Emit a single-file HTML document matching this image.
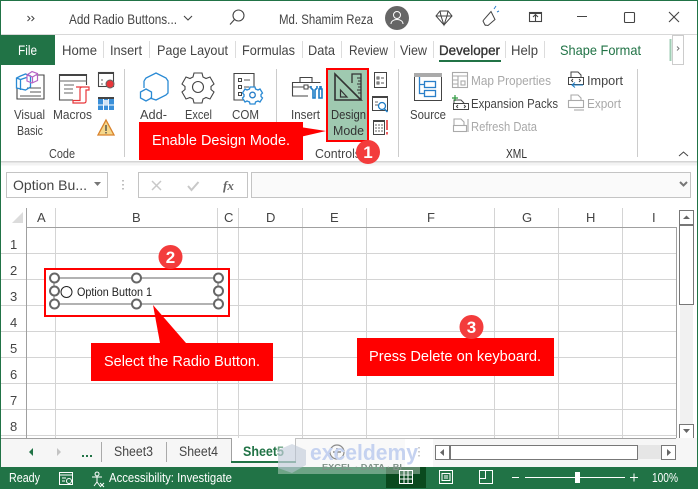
<!DOCTYPE html>
<html><head><meta charset="utf-8"><style>
html,body{margin:0;padding:0;background:#fff}
svg{display:block}
text{font-family:"Liberation Sans",sans-serif;fill:#444;font-size:13px}
.i{fill:none;stroke:#444;stroke-width:1.1}
.b{fill:none;stroke:#2a7fc9;stroke-width:1.3}
.g{fill:none;stroke:#aaa;stroke-width:1.1}
.grid line{stroke:#d4d4d4;stroke-width:1}
.h{fill:#fff;stroke:#666;stroke-width:2}
</style></head><body>
<svg width="698" height="489" viewBox="0 0 698 489" xmlns="http://www.w3.org/2000/svg">
<rect width="698" height="489" fill="#fff"/>
<!-- window frame -->
<rect x="0" y="0" width="698" height="1" fill="#217346"/>
<rect x="0" y="0" width="1" height="489" fill="#217346"/>
<rect x="697" y="0" width="1" height="489" fill="#217346"/>
<rect x="1" y="34" width="696" height="1" fill="#d8d8d8"/>

<!-- title bar -->
<path d="M27.500 16l2.500 2.500-2.500 2.500M31.500 16l2.500 2.500-2.500 2.500" fill="none" stroke="#444" stroke-width="1"/>
<text x="69" y="24" textLength="108" lengthAdjust="spacingAndGlyphs" style="font-size:14px">Add Radio Buttons...</text>
<path d="M184 16l4 4 4-4" fill="none" stroke="#444" stroke-width="1.100"/>
<circle cx="238.500" cy="15.500" r="5.500" class="i"/><path d="M234.500 19.500l-4.500 5" class="i"/>
<text x="279" y="24" textLength="94" lengthAdjust="spacingAndGlyphs" style="font-size:14px">Md. Shamim Reza</text>
<circle cx="397" cy="18" r="12" fill="#666"/>
<circle cx="397" cy="15" r="3.500" fill="none" stroke="#fff"/><path d="M391 24c0-6 12-6 12 0" fill="none" stroke="#fff"/>
<path d="M440 11h8l4 5-8 9-8-9zM436 16h16M441 16l3 9 3-9M440 11l1 5M448 11l-1 5" fill="none" stroke="#444"/>
<path d="M483 21l2 4 3 .5 7-6-4-8-7 8zM486 25l-1 .5" fill="none" stroke="#444"/>
<path d="M494 9l2-3M497 12l2-1" stroke="#2a7fc9" fill="none"/>
<rect x="529.500" y="12.500" width="12" height="9" class="i"/><rect x="529" y="12" width="13" height="2" fill="#444"/><path d="M535.500 21v-6M533 17l2.500-2.500 2.500 2.500" class="i"/>
<rect x="577" y="16" width="10" height="1" fill="#444"/>
<rect x="624.500" y="12.500" width="10" height="10" rx="1" class="i"/>
<path d="M669 12l10 10M679 12l-10 10" class="i"/>

<!-- tabs -->
<rect x="0" y="35" width="55" height="30" fill="#217346"/>
<text x="18" y="55" textLength="19" lengthAdjust="spacingAndGlyphs" style="font-size:14px;fill:#fff">File</text>
<text x="62" y="55" textLength="35" lengthAdjust="spacingAndGlyphs" style="font-size:14px">Home</text>
<text x="110" y="55" textLength="32" lengthAdjust="spacingAndGlyphs" style="font-size:14px">Insert</text>
<text x="157" y="55" textLength="71" lengthAdjust="spacingAndGlyphs" style="font-size:14px">Page Layout</text>
<text x="242" y="55" textLength="53" lengthAdjust="spacingAndGlyphs" style="font-size:14px">Formulas</text>
<text x="308" y="55" textLength="27" lengthAdjust="spacingAndGlyphs" style="font-size:14px">Data</text>
<text x="349" y="55" textLength="39" lengthAdjust="spacingAndGlyphs" style="font-size:14px">Review</text>
<text x="400" y="55" textLength="27" lengthAdjust="spacingAndGlyphs" style="font-size:14px">View</text>
<text x="439" y="55" textLength="61" lengthAdjust="spacingAndGlyphs" style="font-size:14px;fill:#333;stroke:#333;stroke-width:.35">Developer</text>
<text x="511" y="55" textLength="27" lengthAdjust="spacingAndGlyphs" style="font-size:14px">Help</text>
<text x="560" y="55" textLength="81" lengthAdjust="spacingAndGlyphs" style="font-size:14px;fill:#217346">Shape Format</text>
<rect x="439" y="60" width="62" height="2" fill="#217346"/>
<path d="M103.500 41v17M149.500 41v17M235.500 41v17M302.500 41v17M341.500 41v17M394.500 41v17M433.500 41v17M505.500 41v17M544.500 41v17" stroke="#dcdcdc" fill="none"/>
<path d="M670.500 39v22" stroke="#9fcdb4" stroke-width="2" fill="none"/>
<rect x="672.500" y="35.500" width="11" height="29" fill="#fff" stroke="#ccc"/>
<path d="M677 46.500l2 2-2 2" fill="none" stroke="#777"/>

<!-- ribbon -->
<rect x="1" y="161" width="696" height="1.500" fill="#d4d4d4"/>
<rect x="1" y="162.500" width="696" height="3" fill="#f3f3f3"/>
<path d="M124.500 69v88M276.500 69v88M398.500 69v88M637.500 69v88" stroke="#ccc" fill="none"/>

<!-- Visual Basic -->
<path d="M36 75h8v24H17V88" class="i"/><path d="M27 88h14M30 92h11M20 96h21" stroke="#555" fill="none"/>
<path d="M20.500 76l5-2 5 2v11l-5 3-9-2V78zM16.500 78l4 1.500 6-2M20.500 79.500V90" fill="none" stroke="#2a8ad4" stroke-width="1.300"/>
<path d="M27 75l5-3.500 5.500 2v7l-5.500 2.500-5-2zM27 75l5.500 2 5-3M32.500 77v6" fill="none" stroke="#b563c4" stroke-width="1.200"/>
<text x="14" y="119" textLength="31" lengthAdjust="spacingAndGlyphs">Visual</text>
<text x="17" y="135" textLength="26" lengthAdjust="spacingAndGlyphs">Basic</text>
<!-- Macros -->
<path d="M73 100H59.500V74.500h27V85" class="i"/><rect x="59" y="74" width="28" height="2" fill="#444"/>
<path d="M59 81h28M64 85h10M64 89h9M64 93h9" stroke="#666" fill="none"/>
<path d="M76 87h13v3h-3v11c0 1.500-1 2-2 2H73v-2.500h7V89c0-1 1-2 2-2" fill="#fff" stroke="#e8363a" stroke-width="1.200"/>
<text x="53" y="119" textLength="39" lengthAdjust="spacingAndGlyphs">Macros</text>
<!-- small code icons -->
<rect x="98.500" y="72.500" width="15" height="14" class="i"/><rect x="98" y="72" width="16" height="2" fill="#444"/>
<circle cx="110" cy="84" r="4" fill="#e8363a" stroke="#666"/><path d="M101 80h2M101 84h2" stroke="#666"/>
<rect x="98" y="97" width="16" height="13" fill="#3a8fd9"/><path d="M98 105h16M103.500 97v13M108.500 97v13" stroke="#fff" fill="none"/><rect x="98" y="97" width="16" height="2" fill="#444"/><rect x="103.500" y="100" width="5" height="5" fill="#cfe3f5"/>
<path d="M106 120l8 15H98z" fill="#f5d78b" stroke="#d9822b" stroke-width="1.300"/><path d="M106 125v6M106 132v1.500" stroke="#444" stroke-width="1.300"/>
<text x="49" y="158" textLength="26" lengthAdjust="spacingAndGlyphs">Code</text>

<!-- Add-ins -->
<path d="M144 81l2-3 10-5 10 5 2 3v12l-2 2-10 5-6-2M144 81v7" fill="none" stroke="#2a8ad4" stroke-width="1.300"/>
<path d="M146 89l5.500 3v6l-5.500 3-5.500-3v-6z" fill="none" stroke="#2a8ad4" stroke-width="1.300"/>
<text x="140" y="119" textLength="27" lengthAdjust="spacingAndGlyphs">Add-</text>
<!-- gear -->
<path d="M194 73h8l1 4 3 1.500 4-1.500 4 7-3 2.500v3l3 2.500-4 7-4-1.500-3 1.500-1 4h-8l-1-4-3-1.500-4 1.500-4-7 3-2.500v-3l-3-2.500 4-7 4 1.500 3-1.500z" class="i"/>
<circle cx="198" cy="87" r="5.500" class="i"/>
<text x="185" y="119" textLength="27" lengthAdjust="spacingAndGlyphs">Excel</text>
<!-- COM -->
<path d="M247 100h-13V73.500h20V88" class="i"/>
<rect x="238.500" y="78.500" width="3" height="3" class="i" style="stroke-width:1"/><rect x="238.500" y="85.500" width="3" height="3" class="i" style="stroke-width:1"/><rect x="238.500" y="92.500" width="3" height="3" class="i" style="stroke-width:1"/>
<path d="M244 80h6M244 87h5" stroke="#555" fill="none"/>
<path d="M250 87h5l.5 2 2.500 1 2-1 2.500 4-1.500 1.500v2l1.500 1.500-2.500 4-2-1-2.500 1-.5 2h-5l-.5-2-2.500-1-2 1-2.500-4 1.500-1.500v-2l-1.500-1.500 2.500-4 2 1 2.500-1z" stroke="#2a8ad4" stroke-width="1.300" fill="#fff"/>
<circle cx="252.500" cy="95" r="2.800" class="b"/>
<text x="232" y="119" textLength="27" lengthAdjust="spacingAndGlyphs">COM</text>

<!-- Insert -->
<path d="M300 82v-4.500h12V82M308 96h-15.500V82.500h28" class="i"/><path d="M293 87h11M308 87h3" stroke="#444"/>
<rect x="304" y="85" width="4" height="4" class="i" style="stroke-width:1"/>
<path d="M311 86v2l2 2v8h2v-8l2-2v-2M320 86v3h-1v9h3v-9h-1v-3" fill="none" stroke="#1d7cc5" stroke-width="1.600"/>
<text x="291" y="119" textLength="29" lengthAdjust="spacingAndGlyphs">Insert</text>

<!-- Design Mode -->
<rect x="327" y="69" width="41" height="72" fill="#9fc9b0" stroke="#f00" stroke-width="2"/>
<path d="M335 74v26h26z" fill="none" stroke="#333" stroke-width="1.600"/>
<path d="M340.500 90l6.500 7h-6.500z" fill="none" stroke="#333" stroke-width="1.200"/>
<path d="M352 83V74h9v26" fill="none" stroke="#333" stroke-width="1.300"/>
<path d="M357 78h4M358 81h3M357 84h4M358 87h3M357 90h4M358 93h3" stroke="#333" fill="none"/>
<text x="331" y="119" textLength="35" lengthAdjust="spacingAndGlyphs" style="fill:#333">Design</text>
<text x="333" y="135" textLength="31" lengthAdjust="spacingAndGlyphs" style="fill:#333">Mode</text>

<!-- small controls -->
<rect x="374.500" y="72.500" width="12" height="15" class="i" style="stroke-width:1"/>
<path d="M377 77h2v2h-2zM377 82h2v2h-2zM381 78h3M381 83h3" stroke="#555" fill="none"/>
<rect x="372.500" y="96.500" width="15" height="14" class="i" style="stroke-width:1"/><rect x="372" y="96" width="16" height="2" fill="#444"/>
<circle cx="382" cy="106" r="3.500" fill="none" stroke="#1d7cc5" stroke-width="1.300"/><path d="M384.500 109l3 3" stroke="#1d7cc5" stroke-width="1.500"/>
<path d="M375 102h3M375 105h3" stroke="#666"/>
<rect x="373.500" y="120.500" width="11" height="14" class="i" style="stroke-width:1"/><rect x="373" y="120" width="12" height="2" fill="#444"/>
<path d="M375 125h8M375 128h8M375 131h8" stroke="#666" stroke-dasharray="2 1" fill="none"/>
<path d="M387 120v10M387 132v2.500" stroke="#e8363a" stroke-width="1.600"/>

<!-- Source -->
<rect x="414.500" y="73.500" width="27" height="27" fill="#fff" stroke="#444"/><rect x="414" y="73" width="28" height="4" fill="#aaa"/>
<rect x="424.500" y="81.500" width="11" height="6" class="b"/><rect x="424.500" y="90.500" width="11" height="6" class="b"/>
<path d="M419.500 77v16.500h5M419.500 84.500h5" class="b"/>
<text x="410" y="119" textLength="36" lengthAdjust="spacingAndGlyphs">Source</text>

<!-- XML small commands -->
<rect x="452.500" y="72.500" width="15" height="15" class="g"/><path d="M452 76h16M458 76v12M452 80h6M452 84h6" class="g"/><rect x="461" y="81" width="4" height="4" class="g"/>
<text x="471" y="85" textLength="80" lengthAdjust="spacingAndGlyphs" style="fill:#a8a8a8">Map Properties</text>
<path d="M454 103v-3h7l3 3" class="i" style="stroke-width:1"/><rect x="453.500" y="103.500" width="15" height="6" fill="#fff" stroke="#444"/><path d="M458 105l-1.500 1.500 1.500 1.500M464 105l1.500 1.500-1.500 1.500" stroke="#444" fill="none"/>
<path d="M452 98h6M455 95v6" stroke="#2d9a3f" stroke-width="1.200"/>
<text x="471" y="108" textLength="87" lengthAdjust="spacingAndGlyphs">Expansion Packs</text>
<path d="M454 125v-6h7l3 3v3" class="g"/><rect x="453.500" y="125.500" width="13" height="6" class="g"/><path d="M468 119v13" class="g"/>
<text x="471" y="131" textLength="66" lengthAdjust="spacingAndGlyphs" style="fill:#a8a8a8">Refresh Data</text>
<path d="M571 77v-5h7l3 3v3" class="i" style="stroke-width:1"/><rect x="568.500" y="77.500" width="15" height="7" fill="#fff" stroke="#444"/><path d="M573 79l-1.500 1.500 1.500 1.500M579 79l1.500 1.500-1.500 1.500" stroke="#444" fill="none"/><path d="M572 85h11M575 82.500l-3 2.500 3 2.500" stroke="#1d7cc5" fill="none"/>
<text x="587" y="85" textLength="36" lengthAdjust="spacingAndGlyphs">Import</text>
<path d="M571 100v-5h7l3 3v3" class="g"/><rect x="568.500" y="100.500" width="15" height="7" class="g"/><path d="M574 110h10" class="g"/>
<text x="587" y="108" textLength="34" lengthAdjust="spacingAndGlyphs" style="fill:#a8a8a8">Export</text>
<text x="506" y="158" textLength="21" lengthAdjust="spacingAndGlyphs" style="fill:#333">XML</text>
<path d="M679 156l4.500-4 4.500 4" fill="none" stroke="#444"/>
<text x="315" y="158" textLength="46" lengthAdjust="spacingAndGlyphs">Controls</text>

<!-- callout 1 -->
<path d="M300 127L326 131 300 137z" fill="#f00"/>
<rect x="139" y="122" width="164" height="38" fill="#f00"/>
<text x="152" y="145" textLength="138" lengthAdjust="spacingAndGlyphs" style="font-size:15px;fill:#fff">Enable Design Mode.</text>
<circle cx="368" cy="152" r="12" fill="#f33c3c"/>
<text x="368" y="158" text-anchor="middle" style="font-size:17px;font-weight:bold;fill:#fff">1</text>

<!-- formula bar -->
<rect x="6.500" y="172.500" width="101" height="25" fill="#fff" stroke="#c4c4c4"/>
<text x="13" y="190" textLength="74" lengthAdjust="spacingAndGlyphs" style="font-size:14px">Option Bu...</text>
<path d="M94 182h7l-3.500 4z" fill="#777"/>
<path d="M123 180v1.500M123 184v1.500M123 188v1.500" stroke="#aaa" stroke-width="1.500"/>
<rect x="138.500" y="172.500" width="109" height="25" fill="#fff" stroke="#c4c4c4"/>
<path d="M152 181l9 9M161 181l-9 9" stroke="#c8c8c8" stroke-width="1.500"/>
<path d="M188 186l3.500 4 7-8" fill="none" stroke="#c8c8c8" stroke-width="2"/>
<text x="223" y="190" style="font-family:'Liberation Serif',serif;font-style:italic;font-weight:bold;font-size:13px;fill:#666">fx</text>
<rect x="251.500" y="172.500" width="439" height="25" fill="#fafafa" stroke="#c4c4c4"/>
<path d="M680 182l3.500 3.500 3.500-3.500" fill="none" stroke="#777" stroke-width="2"/>

<!-- grid headers -->
<path d="M23 212v11H12z" fill="#dcdcdc"/>
<g class="grid">
<line x1="27" x2="676" y1="253.500" y2="253.500"/><line x1="27" x2="676" y1="279.500" y2="279.500"/><line x1="27" x2="676" y1="305.500" y2="305.500"/><line x1="27" x2="676" y1="331.500" y2="331.500"/><line x1="27" x2="676" y1="357.500" y2="357.500"/><line x1="27" x2="676" y1="383.500" y2="383.500"/><line x1="27" x2="676" y1="409.500" y2="409.500"/><line x1="1" x2="676" y1="435.500" y2="435.500"/>
<line x1="1" x2="26" y1="253.500" y2="253.500"/><line x1="1" x2="26" y1="279.500" y2="279.500"/><line x1="1" x2="26" y1="305.500" y2="305.500"/><line x1="1" x2="26" y1="331.500" y2="331.500"/><line x1="1" x2="26" y1="357.500" y2="357.500"/><line x1="1" x2="26" y1="383.500" y2="383.500"/><line x1="1" x2="26" y1="409.500" y2="409.500"/>
<line x1="55.500" x2="55.500" y1="208" y2="438"/><line x1="217.500" x2="217.500" y1="208" y2="438"/><line x1="238.500" x2="238.500" y1="208" y2="438"/><line x1="302.500" x2="302.500" y1="208" y2="438"/><line x1="366.500" x2="366.500" y1="208" y2="438"/><line x1="494.500" x2="494.500" y1="208" y2="438"/><line x1="558.500" x2="558.500" y1="208" y2="438"/><line x1="622.500" x2="622.500" y1="208" y2="438"/>
</g>
<path d="M26.500 208v230M26 227.500h650M676.500 227v211" stroke="#a0a0a0" fill="none"/>
<text x="37" y="222">A</text><text x="132" y="222">B</text><text x="224" y="222">C</text><text x="266" y="222">D</text><text x="330" y="222">E</text><text x="427" y="222">F</text><text x="522" y="222">G</text><text x="586" y="222">H</text><text x="652" y="222">I</text>
<text x="10" y="249">1</text><text x="10" y="275">2</text><text x="10" y="301">3</text><text x="10" y="327">4</text><text x="10" y="353">5</text><text x="10" y="379">6</text><text x="10" y="405">7</text><text x="10" y="431">8</text>

<!-- vertical scrollbar -->
<rect x="677" y="208" width="20" height="230" fill="#fff"/>
<rect x="680" y="305" width="13" height="119" fill="#f1f1f1"/>
<rect x="679.500" y="210.500" width="14" height="14" fill="#fff" stroke="#777"/><path d="M683 219h7l-3.500-3.500z" fill="#666"/>
<rect x="679.500" y="225.500" width="14" height="79" fill="#fff" stroke="#777"/>
<rect x="679.500" y="424.500" width="14" height="14" fill="#fff" stroke="#777"/><path d="M683 429h7l-3.500 4z" fill="#666"/>

<!-- control -->
<rect x="45" y="269" width="184" height="47" fill="#fff" stroke="#f00" stroke-width="2"/>
<rect x="54" y="278" width="164" height="26" fill="none" stroke="#666" stroke-width="1"/>
<circle class="h" cx="54.500" cy="278" r="4.500"/><circle class="h" cx="136.500" cy="278" r="4.500"/><circle class="h" cx="218.500" cy="278" r="4.500"/>
<circle class="h" cx="54.500" cy="291" r="4.500"/><circle class="h" cx="218.500" cy="291" r="4.500"/>
<circle class="h" cx="54.500" cy="304" r="4.500"/><circle class="h" cx="136.500" cy="304" r="4.500"/><circle class="h" cx="218.500" cy="304" r="4.500"/>
<circle cx="66.500" cy="292" r="5.500" fill="#fff" stroke="#222"/>
<text x="77" y="296" textLength="75" lengthAdjust="spacingAndGlyphs" style="font-size:11.500px;fill:#222">Option Button 1</text>
<circle cx="170.500" cy="257" r="12" fill="#f33c3c"/>
<text x="170.500" y="263" text-anchor="middle" style="font-size:17px;font-weight:bold;fill:#fff">2</text>

<!-- callout 2 -->
<path d="M153 305L186 343H160z" fill="#f00"/>
<rect x="91" y="343" width="182" height="38" fill="#f00"/>
<text x="104" y="366" textLength="156" lengthAdjust="spacingAndGlyphs" style="font-size:15px;fill:#fff">Select the Radio Button.</text>

<!-- callout 3 -->
<rect x="357" y="338" width="197" height="38" fill="#f00"/>
<text x="369" y="361" textLength="172" lengthAdjust="spacingAndGlyphs" style="font-size:15px;fill:#fff">Press Delete on keyboard.</text>
<circle cx="471.500" cy="327" r="12" fill="#f33c3c"/>
<text x="471.500" y="333" text-anchor="middle" style="font-size:17px;font-weight:bold;fill:#fff">3</text>

<!-- sheet tabs -->
<rect x="1" y="438" width="696" height="29" fill="#f6f6f6"/>
<path d="M1 438.500h231M295 438.500h381" stroke="#a0a0a0" fill="none"/>
<path d="M33 448v8l-4-4z" fill="#217346"/><path d="M57 448v8l4-4z" fill="#c4c4c4"/>
<path d="M82 455h2v2h-2zM86 455h2v2h-2zM90 455h2v2h-2z" fill="#217346"/>
<path d="M101.500 442v20M166.500 442v20" stroke="#aaa" fill="none"/>
<text x="114" y="456" textLength="39" lengthAdjust="spacingAndGlyphs" style="font-size:13.500px">Sheet3</text>
<text x="179" y="456" textLength="39" lengthAdjust="spacingAndGlyphs" style="font-size:13.500px">Sheet4</text>
<rect x="232" y="438" width="63" height="25" fill="#fff"/>
<path d="M231.500 438v24M295.500 438v24" stroke="#a0a0a0" fill="none"/>
<rect x="231" y="461" width="65" height="2" fill="#217346"/>
<text x="243" y="456" textLength="41" lengthAdjust="spacingAndGlyphs" style="font-size:13.500px;font-weight:bold;fill:#217346">Sheet5</text>

<!-- h scrollbar -->
<rect x="405" y="439" width="28" height="28" fill="#fff"/>
<rect x="638" y="445" width="24" height="14" fill="#e6e6e6"/>
<rect x="435.500" y="445.500" width="14" height="14" fill="#fff" stroke="#777"/><path d="M444 449v7l-4-3.500z" fill="#666"/>
<rect x="450.500" y="445.500" width="187" height="14" fill="#fff" stroke="#777"/>
<rect x="661.500" y="445.500" width="14" height="14" fill="#fff" stroke="#777"/><path d="M667 449v7l4-3.500z" fill="#666"/>
<path d="M419 447v1.500M419 451v1.500M419 455v1.500" stroke="#999" stroke-width="1.500"/>

<!-- status bar -->
<rect x="1" y="467" width="696" height="22" fill="#217346"/>
<rect x="386" y="467" width="40" height="21" fill="#0a4a1e"/>
<text x="9" y="482" textLength="31" lengthAdjust="spacingAndGlyphs" style="font-size:12.500px;fill:#fff">Ready</text>
<rect x="59.500" y="472.500" width="13" height="12" fill="none" stroke="#fff"/><path d="M59 475h14M62 478h4M62 481h3" stroke="#fff" fill="none"/><circle cx="69" cy="481" r="2.500" fill="#217346" stroke="#fff"/>
<path d="M97 472a2 2 0 1 0 .1 0M92 477l10 0M97 477v5l-3 4M97 482l3 4M100 483l4 4M104 483l-4 4" fill="none" stroke="#fff"/>
<text x="109" y="482" textLength="123" lengthAdjust="spacingAndGlyphs" style="font-size:12.500px;fill:#fff">Accessibility: Investigate</text>
<path d="M399.500 470.500h13v13h-13zM399.500 475h13M399.500 479h13M404 470.500v13M408 470.500v13" fill="none" stroke="#fff"/>
<rect x="439.500" y="470.500" width="13" height="13" fill="none" stroke="#fff"/><path d="M442 473.500h8v7h-8zM444 476h4M444 478h4" fill="none" stroke="#fff"/>
<path d="M479.500 470.500h13v13h-13zM479.500 478.500h6v-8" fill="none" stroke="#fff"/>
<rect x="512" y="477" width="7" height="1" fill="#fff"/>
<rect x="525" y="477" width="100" height="1" fill="#fff"/>
<rect x="575" y="472" width="5" height="11" fill="#fff"/>
<path d="M630 477.500h8M634 473.500v8" stroke="#fff" fill="none"/>
<text x="652" y="482" textLength="26" lengthAdjust="spacingAndGlyphs" style="font-size:12.500px;fill:#fff">100%</text>

<!-- watermark -->
<rect x="278" y="438" width="142" height="36" fill="#fff" opacity=".35"/>
<path d="M278 450l14-6 14 6 0 15-14 8-14-5z" fill="#b9c4d6" opacity=".55"/>
<circle cx="337" cy="452" r="7" fill="none" stroke="#8a8a8a" stroke-width="1.200"/><path d="M333 452h8M337 448v8" stroke="#777" stroke-width="1.300"/>
<text x="310" y="460" textLength="108" lengthAdjust="spacingAndGlyphs" style="font-size:22px;font-weight:bold;fill:#c5d2f0">exceldemy</text>
<text x="322" y="470" textLength="80" lengthAdjust="spacingAndGlyphs" style="font-size:8px;font-weight:bold;fill:#7f9187">EXCEL · DATA · BI</text>
</svg>
</body></html>
